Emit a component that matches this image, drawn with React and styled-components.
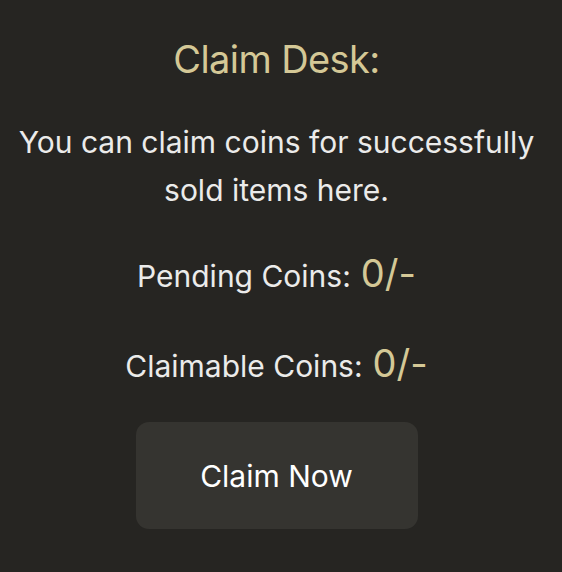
import React from 'react';
import styled, { createGlobalStyle } from 'styled-components';

const GlobalStyle = createGlobalStyle`
  html, body {
    margin: 0;
    padding: 0;
    background: #262522;
  }
  body {
    font-family: Inter, "Noto Sans", sans-serif;
  }
`;

const Desk = styled.div`
  width: 562px;
  height: 572px;
  box-sizing: border-box;
  padding: 37px 9px 0 0;
  display: flex;
  flex-direction: column;
  align-items: center;
  background: #262522;
  color: #ebebea;
  text-align: center;
`;

const Title = styled.h2`
  margin: 0;
  font-size: 38px;
  font-weight: 400;
  letter-spacing: -0.6px;
  color: #d4c896;
  line-height: 44px;
`;

const Description = styled.p`
  margin: 37px 0 0;
  font-size: 30px;
  line-height: 48px;
  max-width: 553px;
`;

const Stat = styled.div`
  margin-top: ${(p) => p.$gap}px;
  font-size: 30px;
  line-height: 44px;
  display: flex;
  align-items: baseline;
  gap: 10px;
`;

const Amount = styled.span`
  font-size: 38px;
  line-height: 44px;
  color: #d4c896;
`;

const ClaimButton = styled.button`
  margin-top: 34px;
  width: 282px;
  height: 107px;
  border: none;
  border-radius: 13px;
  background: #353430;
  color: #ffffff;
  font-family: inherit;
  font-size: 30px;
  cursor: pointer;
`;

export default function App() {
  return (
    <>
      <GlobalStyle />
      <Desk>
        <Title>Claim Desk:</Title>
        <Description>
          You can claim coins for successfully sold items here.
        </Description>
        <Stat $gap={37}>
          <span>Pending Coins:</span>
          <Amount>0/-</Amount>
        </Stat>
        <Stat $gap={43}>
          <span>Claimable Coins:</span>
          <Amount>0/-</Amount>
        </Stat>
        <ClaimButton>Claim Now</ClaimButton>
      </Desk>
    </>
  );
}
